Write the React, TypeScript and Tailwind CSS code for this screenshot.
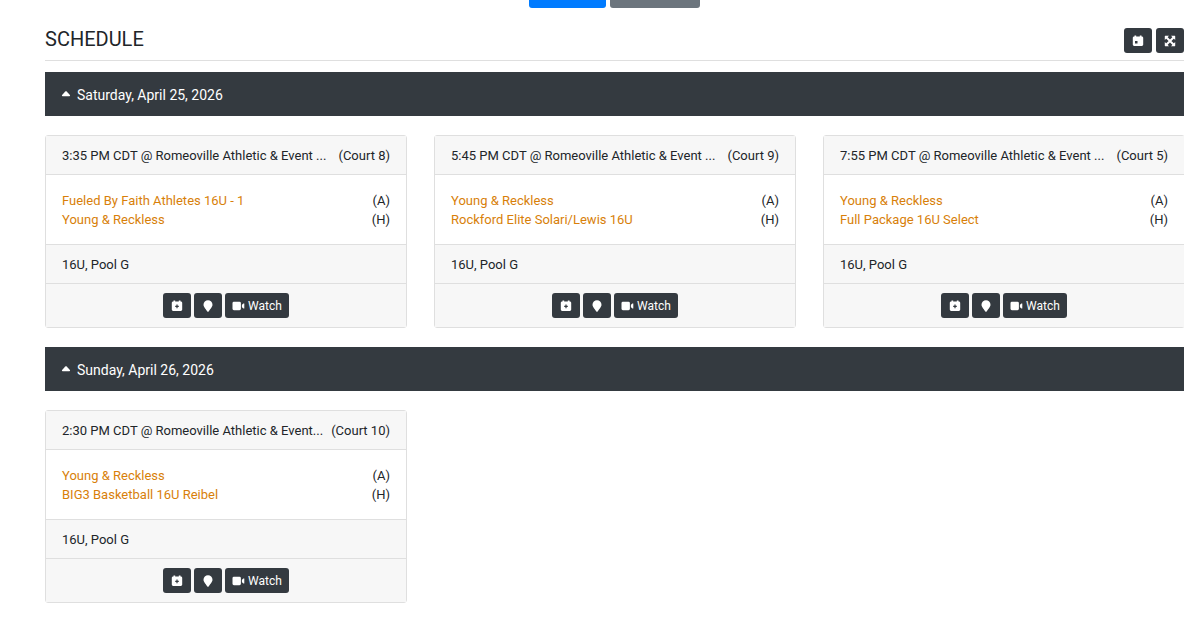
import React from "react";

interface Game {
  time: string;
  venue: string;
  court: string;
  away: string;
  home: string;
  division: string;
}

interface GameDay {
  date: string;
  games: Game[];
}

const DAYS: GameDay[] = [
  {
    date: "Saturday, April 25, 2026",
    games: [
      {
        time: "3:35 PM CDT",
        venue: "Romeoville Athletic & Event ...",
        court: "Court 8",
        away: "Fueled By Faith Athletes 16U - 1",
        home: "Young & Reckless",
        division: "16U, Pool G",
      },
      {
        time: "5:45 PM CDT",
        venue: "Romeoville Athletic & Event ...",
        court: "Court 9",
        away: "Young & Reckless",
        home: "Rockford Elite Solari/Lewis 16U",
        division: "16U, Pool G",
      },
      {
        time: "7:55 PM CDT",
        venue: "Romeoville Athletic & Event ...",
        court: "Court 5",
        away: "Young & Reckless",
        home: "Full Package 16U Select",
        division: "16U, Pool G",
      },
    ],
  },
  {
    date: "Sunday, April 26, 2026",
    games: [
      {
        time: "2:30 PM CDT",
        venue: "Romeoville Athletic & Event...",
        court: "Court 10",
        away: "Young & Reckless",
        home: "BIG3 Basketball 16U Reibel",
        division: "16U, Pool G",
      },
    ],
  },
];

const CalendarIcon: React.FC<{ plus?: boolean }> = ({ plus }) => (
  <svg viewBox="0 0 12 12" className="size-3" fill="currentColor" aria-hidden="true">
    <path
      fillRule="evenodd"
      d={
        plus
          ? "M2.5.5h1.7v1h3.6v-1h1.7v1h.3c.8 0 1.4.6 1.4 1.4v6.7c0 .8-.6 1.4-1.4 1.4H2.2C1.4 11 .8 10.400.8 9.600V2.900c0-.8.6-1.400 1.400-1.400h.3zM5.400 4.600v1.200H4.200V7h1.200v1.200h1.200V7h1.200V5.800H6.600V4.600z"
          : "M2.500.5h1.700v1h3.600v-1h1.700v1h.3c.8 0 1.400.6 1.400 1.400v6.700c0 .8-.6 1.400-1.400 1.400H2.200C1.400 11 .8 10.400.8 9.600V2.900c0-.8.6-1.400 1.400-1.400h.3zM3 6v2.500h2.500V6z"
      }
    />
  </svg>
);

const ExpandIcon = () => (
  <svg viewBox="0 0 12 12" className="size-3" aria-hidden="true">
    <path d="M2.500 2.500l7 7M9.500 2.500l-7 7" stroke="currentColor" strokeWidth="2" />
    <path
      fill="currentColor"
      d="M.8 1.300c0-.3.200-.5.500-.5h3.700L.8 5zM11.200 1.300c0-.3-.2-.5-.5-.5H7l4.200 4.200zM.8 10.700c0 .3.200.5.500.5H5L.8 7zM11.200 10.700c0 .3-.2.5-.5.5H7L11.200 7z"
    />
  </svg>
);

const MarkerIcon = () => (
  <svg viewBox="0 0 12 12" className="size-3" fill="currentColor" aria-hidden="true">
    <path d="M6 .2a4.500 4.500 0 0 1 4.500 4.500C10.500 7 7.400 10 6.600 11.500a.7.7 0 0 1-1.200 0C4.600 10 1.500 7 1.500 4.700A4.500 4.500 0 0 1 6 .2z" />
  </svg>
);

const VideoIcon = () => (
  <svg viewBox="0 0 13 12" className="h-3 w-[13px]" fill="currentColor" aria-hidden="true">
    <path d="M1.900 1.800h5.600a1.400 1.400 0 0 1 1.400 1.400v5.600a1.400 1.400 0 0 1-1.400 1.400H1.900A1.400 1.400 0 0 1 .5 8.800V3.200A1.400 1.400 0 0 1 1.900 1.800zM9.900 4.700l1.700-1.300c.3-.2.7 0 .7.400v4.400c0 .4-.4.600-.7.400L9.900 7.300z" />
  </svg>
);

const CaretUpIcon = () => (
  <svg viewBox="0 0 10 6" className="mb-[2px] h-[6px] w-[10px]" fill="currentColor" aria-hidden="true">
    <path d="M5 .3c.3 0 .5.1.7.3l3.200 3.400c.4.500.2 1.200-.5 1.200H1.600c-.7 0-.9-.7-.5-1.200L4.300.6c.2-.2.4-.3.7-.3z" />
  </svg>
);

interface DarkButtonProps {
  label?: string;
  wide?: boolean;
  children: React.ReactNode;
}

const DarkButton: React.FC<DarkButtonProps> = ({ label, wide, children }) => (
  <button
    type="button"
    aria-label={label}
    className={`flex h-[25px] items-center justify-center gap-[3px] rounded-[3px] bg-[#343a40] text-xs text-white hover:bg-[#23272b] ${
      wide ? "w-16" : "w-7"
    }`}
  >
    {children}
  </button>
);

const TeamRow: React.FC<{ name: string; side: string }> = ({ name, side }) => (
  <div className="flex justify-between">
    <a href="#team" className="text-[#d87f0a] hover:underline">
      {name}
    </a>
    <span>({side})</span>
  </div>
);

const GameCard: React.FC<{ game: Game }> = ({ game }) => (
  <article className="rounded-[3px] border border-[#dfdfdf] bg-white">
    <header className="flex justify-between border-b border-[#dfdfdf] bg-[#f7f7f7] px-4 pt-[10px] pb-[9px] whitespace-nowrap">
      <span>
        {game.time} @ {game.venue}
      </span>
      <span>({game.court})</span>
    </header>
    <div className="px-4 pt-4 pb-[15px]">
      <TeamRow name={game.away} side="A" />
      <TeamRow name={game.home} side="H" />
    </div>
    <div className="border-t border-[#dfdfdf] bg-[#f7f7f7] px-4 pt-[10px] pb-[9px]">{game.division}</div>
    <footer className="flex justify-center gap-[3px] border-t border-[#dfdfdf] bg-[#f7f7f7] py-[9px]">
      <DarkButton label="Add to calendar">
        <CalendarIcon plus />
      </DarkButton>
      <DarkButton label="Show on map">
        <MarkerIcon />
      </DarkButton>
      <DarkButton wide>
        <VideoIcon />
        Watch
      </DarkButton>
    </footer>
  </article>
);

const App: React.FC = () => {
  const [closed, setClosed] = React.useState<string[]>([]);

  const toggle = (date: string) =>
    setClosed((prev) => (prev.includes(date) ? prev.filter((d) => d !== date) : [...prev, date]));

  return (
    <main className="overflow-hidden bg-white pr-4 pl-[45px] font-[Roboto,'Liberation_Sans',sans-serif] text-[13px] leading-[19px] text-[#212529]">
      {/* Bottom edge of the page tabs */}
      <div className="flex justify-center gap-1">
        <button type="button" aria-label="Schedule" className="h-2 w-[77px] rounded-b-[3px] bg-[#007bff]" />
        <button type="button" aria-label="Standings" className="h-2 w-[90px] rounded-b-[3px] bg-[#6c757d]" />
      </div>

      <div className="mt-5 flex items-start justify-between border-b border-[#dfdfdf] pb-[7px]">
        <h1 className="text-xl leading-[22px]">SCHEDULE</h1>
        <div className="flex gap-1">
          <DarkButton label="Calendar">
            <CalendarIcon />
          </DarkButton>
          <DarkButton label="Expand all">
            <ExpandIcon />
          </DarkButton>
        </div>
      </div>

      <div className="mt-[11px] flex flex-col gap-[19px] pb-5">
        {DAYS.map((day) => (
          <section key={day.date} className="flex flex-col gap-[19px]">
            <button
              type="button"
              onClick={() => toggle(day.date)}
              aria-expanded={!closed.includes(day.date)}
              className="flex h-11 items-center gap-[6px] bg-[#343a40] px-4 pt-px text-left text-sm text-white"
            >
              <CaretUpIcon />
              {day.date}
            </button>
            {!closed.includes(day.date) && (
              <div className="overflow-hidden">
                <div className="-mr-px grid grid-cols-3 gap-x-[27px] gap-y-[19px]">
                  {day.games.map((game) => (
                    <GameCard key={game.time} game={game} />
                  ))}
                </div>
              </div>
            )}
          </section>
        ))}
      </div>
    </main>
  );
};

export default App;
